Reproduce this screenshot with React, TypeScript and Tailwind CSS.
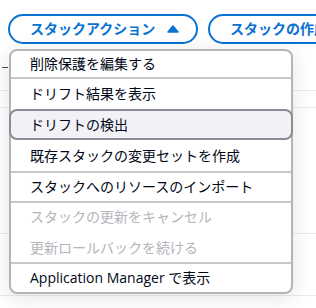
const items = [
  { label: "削除保護を編集する", h: "h-[26px]", divider: true },
  { label: "ドリフト結果を表示", h: "h-[30px]", divider: false },
  { label: "ドリフトの検出", h: "h-[31px]", highlighted: true, divider: false },
  { label: "既存スタックの変更セットを作成", h: "h-[31px]", divider: true },
  { label: "スタックへのリソースのインポート", h: "h-[28px]", divider: true },
  { label: "スタックの更新をキャンセル", h: "h-[28px]", disabled: true, spacer: true },
  { label: "更新ロールバックを続ける", h: "h-[29px]", disabled: true, divider: true },
  { label: "Application Manager で表示", h: "h-[28px]", divider: false },
];

function CaretUp() {
  return (
    <svg width="16" height="16" viewBox="0 0 16 16" className="shrink-0">
      <path d="M3 11 L8 5 L13 11 Z" fill="currentColor" stroke="currentColor" strokeWidth="1.5" strokeLinejoin="round" />
    </svg>
  );
}

export default function App() {
  return (
    <div className="relative w-[316px] h-[308px] overflow-hidden bg-white font-['Open_Sans','Noto_Sans_CJK_JP',sans-serif] text-[14px] leading-5">
      {/* action buttons */}
      <div className="flex gap-[10px] pl-2 pt-[14px] whitespace-nowrap">
        <button className="flex h-[30px] w-[190px] shrink-0 items-center rounded-full border-2 border-[#0972d3] pl-5 pr-[15px] font-bold text-[#0972d3]">
          <span className="flex-1 text-left">スタックアクション</span>
          <CaretUp />
        </button>
        <button className="flex h-[30px] shrink-0 items-center rounded-full border-2 border-[#0972d3] px-5 font-bold text-[#0972d3]">
          スタックの作成
        </button>
      </div>

      {/* page content behind the menu */}
      <div className="mt-[23px] h-px w-[6px] ml-[2px] bg-[#414d5c]" />
      <div className="mt-[22px] h-px bg-[#e9ebed]" />
      <div className="mt-4 h-px bg-[#e9ebed]" />
      <div className="mt-[125px] h-px bg-[#e9ebed]" />
      <div className="mt-[61px] h-px bg-[#e9ebed]" />

      {/* dropdown menu */}
      <div className="absolute left-[9px] top-[49px] w-[284px] rounded-lg border-2 border-[#b4b4bb] bg-white shadow-[0_4px_20px_1px_rgba(0,7,22,0.10)]">
        {items.map((it, i) => (
          <div key={i}>
            <div
              className={
                it.highlighted
                  ? `${it.h} -mx-[2px] flex items-center rounded-lg border-2 border-[#8c8c94] bg-[#f2f2f6] pl-[19px] text-[#000716]`
                  : `${it.h} flex items-center pl-[19px] ${it.disabled ? "text-[#b4b4bb]" : "text-[#000716]"}`
              }
            >
              {it.label}
            </div>
            {it.divider && <div className="h-[2px] bg-[#c6c6cd]" />}
            {it.spacer && <div className="h-[2px]" />}
          </div>
        ))}
      </div>
    </div>
  );
}
